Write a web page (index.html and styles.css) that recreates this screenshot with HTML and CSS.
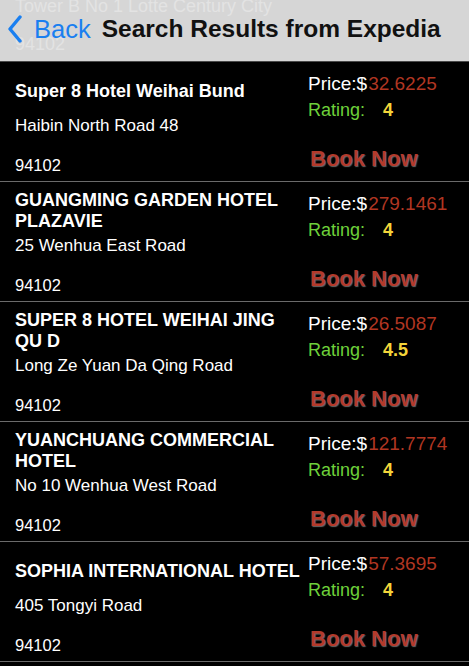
FILE: index.html
```html
<!DOCTYPE html>
<html>
<head>
<meta charset="utf-8">
<link rel="stylesheet" href="styles.css">
</head>
<body>
<header class="navbar">
  <div class="ghost">
    <span class="ghost-addr">Tower B No 1 Lotte Century City</span>
    <span class="ghost-zip">94102</span>
  </div>
  <div class="nav-content">
    <a class="back">
      <svg class="chev" width="16" height="28" viewBox="0 0 16 28"><path d="M13 2 L3 14 L13 26" fill="none" stroke="#1a7ff0" stroke-width="3.4" stroke-linecap="round" stroke-linejoin="round"/></svg>
      <span class="back-text">Back</span>
    </a>
    <h1 class="title">Search Results from Expedia</h1>
  </div>
</header>
<main class="list">
  <div class="row">
    <div class="left">
      <div class="name">Super 8 Hotel Weihai Bund</div>
      <div class="addr">Haibin North Road 48</div>
      <div class="zip">94102</div>
    </div>
    <div class="right">
      <div class="price"><span class="plabel">Price:$</span><span class="pval">32.6225</span></div>
      <div class="rating"><span class="rlabel">Rating:</span><span class="rval">4</span></div>
      <div class="book">Book Now</div>
    </div>
  </div>
  <div class="row">
    <div class="left">
      <div class="name">GUANGMING GARDEN HOTEL PLAZAVIE</div>
      <div class="addr">25 Wenhua East Road</div>
      <div class="zip">94102</div>
    </div>
    <div class="right">
      <div class="price"><span class="plabel">Price:$</span><span class="pval">279.1461</span></div>
      <div class="rating"><span class="rlabel">Rating:</span><span class="rval">4</span></div>
      <div class="book">Book Now</div>
    </div>
  </div>
  <div class="row">
    <div class="left">
      <div class="name">SUPER 8 HOTEL WEIHAI JING QU D</div>
      <div class="addr">Long Ze Yuan Da Qing Road</div>
      <div class="zip">94102</div>
    </div>
    <div class="right">
      <div class="price"><span class="plabel">Price:$</span><span class="pval">26.5087</span></div>
      <div class="rating"><span class="rlabel">Rating:</span><span class="rval">4.5</span></div>
      <div class="book">Book Now</div>
    </div>
  </div>
  <div class="row">
    <div class="left">
      <div class="name">YUANCHUANG COMMERCIAL HOTEL</div>
      <div class="addr">No 10 Wenhua West Road</div>
      <div class="zip">94102</div>
    </div>
    <div class="right">
      <div class="price"><span class="plabel">Price:$</span><span class="pval">121.7774</span></div>
      <div class="rating"><span class="rlabel">Rating:</span><span class="rval">4</span></div>
      <div class="book">Book Now</div>
    </div>
  </div>
  <div class="row">
    <div class="left">
      <div class="name">SOPHIA INTERNATIONAL HOTEL</div>
      <div class="addr">405 Tongyi Road</div>
      <div class="zip">94102</div>
    </div>
    <div class="right">
      <div class="price"><span class="plabel">Price:$</span><span class="pval">57.3695</span></div>
      <div class="rating"><span class="rlabel">Rating:</span><span class="rval">4</span></div>
      <div class="book">Book Now</div>
    </div>
  </div>
</main>
</body>
</html>
```
FILE: styles.css
```css
* { box-sizing: border-box; }
html, body { margin: 0; padding: 0; }
body {
  background: #000;
  font-family: "Liberation Sans", Arial, sans-serif;
  width: 469px;
  height: 666px;
  overflow: hidden;
}
.navbar {
  position: relative;
  height: 62px;
  background: #d6d6d6;
  border-bottom: 1px solid #4a4a4a;
}
.ghost {
  position: absolute;
  left: 15px;
  top: 0;
  display: flex;
  flex-direction: column;
  color: #e3e3e3;
  font-size: 18px;
  line-height: 20px;
}
.ghost-addr { margin-top: -4px; }
.ghost-zip { margin-top: 18px; }
.nav-content {
  position: relative;
  display: flex;
  align-items: center;
  height: 58px;
  padding-left: 7px;
}
.back {
  display: flex;
  align-items: center;
  color: #1a7ff0;
}
.chev { margin-right: 11px; }
.back-text {
  font-size: 25.5px;
}
.title {
  margin: 0 0 0 11px;
  font-size: 24.5px;
  font-weight: bold;
  color: #111;
}
.row {
  display: flex;
  height: 120px;
  border-bottom: 1px solid #6a6a6a;
}
.left {
  width: 300px;
  padding-left: 15px;
  color: #fff;
  display: flex;
  flex-direction: column;
}
.name {
  height: 48px;
  padding-top: 10px;
  display: flex;
  align-items: center;
  font-weight: bold;
  font-size: 18px;
  line-height: 21px;
}
.addr {
  height: 32px;
  display: flex;
  align-items: center;
  font-size: 17px;
}
.zip {
  margin-top: 10px;
  height: 26px;
  display: flex;
  align-items: center;
  font-size: 16.5px;
}
.right {
  flex: 1;
  padding-left: 8px;
  display: flex;
  flex-direction: column;
}
.price {
  margin-top: 10px;
  height: 24px;
  display: flex;
  align-items: center;
  font-size: 19px;
}
.plabel { color: #fff; margin-right: 1px; }
.pval { color: #b13622; }
.rating {
  height: 28px;
  display: flex;
  align-items: center;
  font-size: 18px;
}
.rlabel { color: #6ed13a; width: 75px; }
.rval { color: #f3d43a; font-weight: bold; }
.book {
  margin-top: 22px;
  font-size: 22px;
  font-weight: bold;
  color: #b33a2b;
  text-shadow: 1px 1px 1px #666;
  padding-left: 2px;
}
```
